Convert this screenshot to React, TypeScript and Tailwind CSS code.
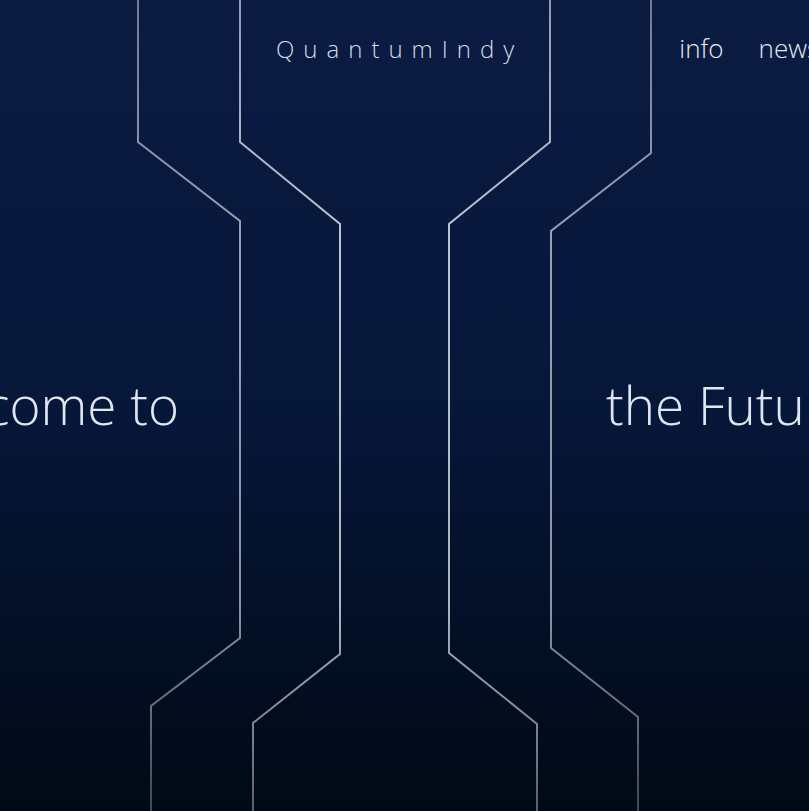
import React from 'react';

const traces = [
  { d: 'M138 0 V142 L240 221 V638 L151 706 V811', stroke: 'url(#traceDim)' },
  { d: 'M240 0 V142 L340 224 V654 L253 723 V811', stroke: 'url(#traceBright)' },
  { d: 'M550 0 V142 L449 224 V653 L537 724 V811', stroke: 'url(#traceBright)' },
  { d: 'M651 0 V153 L551 231 V648 L638 717 V811', stroke: 'url(#traceDim)' },
];

function Circuit() {
  return (
    <svg className="absolute inset-0 pointer-events-none" width="809" height="811" viewBox="0 0 809 811" fill="none">
      <defs>
        <linearGradient id="traceBright" x1="0" y1="0" x2="0" y2="811" gradientUnits="userSpaceOnUse">
          <stop offset="0" stopColor="#8e9db0" />
          <stop offset="0.3" stopColor="#b9c7d0" />
          <stop offset="0.75" stopColor="#a9b6c0" />
          <stop offset="1" stopColor="#56616f" />
        </linearGradient>
        <linearGradient id="traceDim" x1="0" y1="0" x2="0" y2="811" gradientUnits="userSpaceOnUse">
          <stop offset="0" stopColor="#6f7d92" />
          <stop offset="0.3" stopColor="#95a4b4" />
          <stop offset="0.75" stopColor="#8794a2" />
          <stop offset="1" stopColor="#3e4856" />
        </linearGradient>
      </defs>
      {traces.map((t, i) => (
        <path key={i} d={t.d} stroke={t.stroke} strokeWidth="2" strokeLinejoin="miter" />
      ))}
    </svg>
  );
}

export default function App() {
  return (
    <div
      className="relative w-[809px] h-[811px] overflow-hidden bg-gradient-to-b from-[#0b1b42] via-[#07173a] to-[#020916]"
      style={{ fontFamily: '"Open Sans", "Noto Sans", sans-serif' }}
    >
      <Circuit />

      <header className="relative flex items-baseline pt-[32px] pl-[276px] leading-[32px] font-light">
        <a className="text-[24px] text-[#d3dbe7] tracking-[9px] whitespace-nowrap">QuantumIndy</a>
        <nav className="flex gap-[35px] ml-[156px] text-[26px] text-[#e3e9f1] whitespace-nowrap">
          <a>info</a>
          <a>news</a>
          <a>contact</a>
        </nav>
      </header>

      <section className="relative flex mt-[313px] text-[53px] leading-[53px] font-light text-[#dfe6ef] gap-[427px]">
        <div className="w-[179px] shrink-0 flex justify-end">
          <h1 className="shrink-0 whitespace-nowrap">Welcome to</h1>
        </div>
        <h1 className="shrink-0 whitespace-nowrap">the Future</h1>
      </section>
    </div>
  );
}
